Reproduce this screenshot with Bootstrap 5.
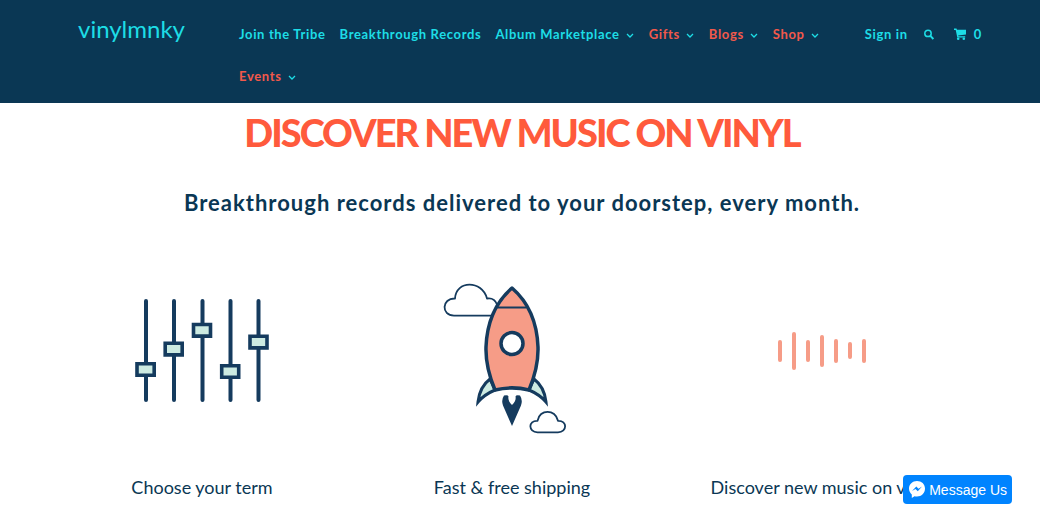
<!DOCTYPE html>
<html lang="en">
<head>
<meta charset="utf-8">
<meta name="viewport" content="width=device-width, initial-scale=1">
<title>vinylmnky</title>
<link href="https://cdn.jsdelivr.net/npm/bootstrap@5.3.0/dist/css/bootstrap.min.css" rel="stylesheet">
<style>
  :root { --navy: #0a3754; --aqua: #1ddde6; --coral: #ff5a3c; }
  body { font-family: Lato, sans-serif; color: var(--navy); overflow-x: hidden; }
  .site-header { background: var(--navy); padding: 13px 58px 6px 78px; }
  .site-header a, .site-header button { color: var(--aqua); text-decoration: none; }
  .brand { font-size: 24px; line-height: 32px; width: 161px; }
  .menu-item { font-size: 13px; line-height: 42px; font-weight: 700; letter-spacing: .05em; white-space: nowrap; }
  .main-menu { column-gap: 14px; }
  .main-menu .hot { color: #f2594b; }
  .chev { margin-left: 6px; margin-right: 1px; }
  .account { margin-left: 24px; }
  .headline { color: var(--coral); font-weight: 900; font-size: 38px; line-height: 48px; letter-spacing: -2px; }
  .tagline { font-size: 22px; line-height: 30px; font-weight: 700; letter-spacing: 1px; margin-top: 32px; }
  .intro { padding: 5px 48px 0 52px; }
  .features { padding: 42px 63px 16px 47px; }
  .features h3 { font-size: 18px; line-height: 26px; font-weight: 400; margin-top: 14px; }
  .art { width: 200px; height: 200px; }
  .message-us { right: 28px; bottom: 27px; height: 29px; padding: 0 5px 0 6px; gap: 4px; border-radius: 4px; background: #0084ff; color: #fff; font: 14px "Liberation Sans", sans-serif; z-index: 5; }
</style>
</head>
<body>
<header class="site-header d-flex align-items-start">
  <a class="brand flex-shrink-0" href="#">vinylmnky</a>
  <nav class="flex-grow-1" aria-label="Main">
    <ul class="main-menu list-unstyled d-flex flex-wrap m-0">
      <li><a class="menu-item" href="#">Join the Tribe</a></li>
      <li><a class="menu-item" href="#">Breakthrough Records</a></li>
      <li><a class="menu-item" href="#">Album Marketplace<svg class="chev" width="8" height="6" viewBox="0 0 8 6" fill="none" stroke="#1ddde6" stroke-width="1.3"><path d="M1 1l3 3 3-3"/></svg></a></li>
      <li><a class="menu-item" href="#"><span class="hot">Gifts</span><svg class="chev" width="8" height="6" viewBox="0 0 8 6" fill="none" stroke="#1ddde6" stroke-width="1.3"><path d="M1 1l3 3 3-3"/></svg></a></li>
      <li><a class="menu-item" href="#"><span class="hot">Blogs</span><svg class="chev" width="8" height="6" viewBox="0 0 8 6" fill="none" stroke="#1ddde6" stroke-width="1.3"><path d="M1 1l3 3 3-3"/></svg></a></li>
      <li><a class="menu-item" href="#"><span class="hot">Shop</span><svg class="chev" width="8" height="6" viewBox="0 0 8 6" fill="none" stroke="#1ddde6" stroke-width="1.3"><path d="M1 1l3 3 3-3"/></svg></a></li>
      <li><a class="menu-item" href="#"><span class="hot">Events</span><svg class="chev" width="8" height="6" viewBox="0 0 8 6" fill="none" stroke="#1ddde6" stroke-width="1.3"><path d="M1 1l3 3 3-3"/></svg></a></li>
    </ul>
  </nav>
  <div class="account menu-item d-flex align-items-center flex-shrink-0">
    <a href="#">Sign in</a>
    <button class="btn border-0 p-0 d-flex ms-3" type="button" aria-label="Search">
      <svg width="10" height="11" viewBox="0 0 10 11" fill="none" stroke="currentColor"><circle cx="4" cy="4.4" r="3.2" stroke-width="1.5"/><path d="M6.4 6.9l3 3.2" stroke-width="2"/></svg>
    </button>
    <a class="d-flex align-items-center ms-3 ps-1" href="#" aria-label="Cart, 0 items">
      <svg class="me-2" width="12" height="12" viewBox="0 0 12 12" fill="currentColor"><path d="M0 .6h2.500l.5 1.200h9v4.600l-7.800 1 .2.9h6.800v1.200H3.300L1.700 1.900H0z"/><circle cx="4.200" cy="10.700" r="1.300"/><circle cx="9.800" cy="10.700" r="1.300"/></svg>0
    </a>
  </div>
</header>

<main>
  <section class="intro text-center">
    <h1 class="headline m-0">DISCOVER NEW MUSIC ON VINYL</h1>
    <h2 class="tagline mb-0">Breakthrough records delivered to your doorstep, every month.</h2>
  </section>
  <section class="features row gx-0 m-0 text-center">
    <div class="col-4">
      <svg class="art" viewBox="102 260 200 200" aria-hidden="true">
        <g stroke="#153b5e" stroke-width="4" stroke-linecap="round"><path d="M146 301v99M174 301v99M202.500 301v99M230.500 301v99M258.500 301v99"/></g>
        <g fill="#cdebe2" stroke="#153b5e" stroke-width="3.600"><path d="M137 363.700h17.200v11.600H137zM165.200 343.300h17v11.600h-17zM193.500 324.500h17v11.600h-17zM221.700 365.700h17v11.600h-17zM250 336.300h17v11.600h-17z"/></g>
      </svg>
      <h3 class="mb-0">Choose your term</h3>
    </div>
    <div class="col-4">
      <svg class="art" viewBox="412 260 200 200" aria-hidden="true">
        <g fill="#fff" stroke="#153b5e" stroke-width="1.800" stroke-linejoin="round">
          <path d="M496 315.700H454c-13 0-12.500-17.700 1-17.200 1-18.500 27-18.500 32 0 6-1 9 3 10 6z"/>
          <path d="M537.500 432.300c-9.500 0-9.500-12 0-11.500 2-12 18-12 20.500 0 9.500-.5 9.500 11.500 0 11.500z"/>
        </g>
        <g stroke="#153b5e" stroke-width="3" stroke-linejoin="miter">
          <path fill="#cdebe2" d="M490 379c-8 6-11 13-12 23 5-6 10-9 17-12zM534 379c8 6 11 13 12 23-5-6-10-9-17-12z"/>
          <path fill="#f69c87" stroke-width="3.500" stroke-linejoin="round" d="M512 288c-15 13-25 33-26 59-.5 16 4 31 9 43 12-3 22-3 34 0 5-12 9.500-27 9-43-1-26-11-46-26-59z"/>
          <path stroke-width="2" d="M497.500 307.500h29"/>
          <circle cx="512" cy="343.500" r="11" fill="#fff" stroke-width="3.500"/>
        </g>
        <path fill="#153b5e" d="M504 395.500q4-1 4.500 1-1 4 3.500 8.500 4.500-4.500 3.500-8.500.5-2 4.500-1 3 4.500 1 10L512 426l-9-20.500q-2-5.500 1-10z"/>
      </svg>
      <h3 class="mb-0">Fast &amp; free shipping</h3>
    </div>
    <div class="col-4">
      <svg class="art" viewBox="722 260 200 200" aria-hidden="true">
        <path stroke="#f69c87" stroke-width="4" stroke-linecap="round" d="M780 342v18M794 334v34M808 342v18M822 337v28M836 341v20M850 344v13M864 341v20"/>
      </svg>
      <h3 class="mb-0 text-nowrap">Discover new music on vinyl</h3>
    </div>
  </section>
</main>

<button class="message-us position-fixed border-0 d-flex align-items-center" type="button">
  <svg width="16" height="17" viewBox="0 0 16 17" aria-hidden="true"><path fill="#fff" d="M8 0C3.500 0 0 3.300 0 7.600c0 2.400 1.100 4.400 2.800 5.800V17l2.700-1.700c.8.200 1.600.3 2.500.3 4.500 0 8-3.500 8-8S12.500 0 8 0z"/><path fill="#0084ff" d="M3 10l4.300-4.600 2.200 2.300L13 5.500 8.800 10.200 6.500 7.900z"/></svg>
  Message Us
</button>
<script src="https://cdn.jsdelivr.net/npm/bootstrap@5.3.0/dist/js/bootstrap.bundle.min.js"></script>
</body>
</html>
